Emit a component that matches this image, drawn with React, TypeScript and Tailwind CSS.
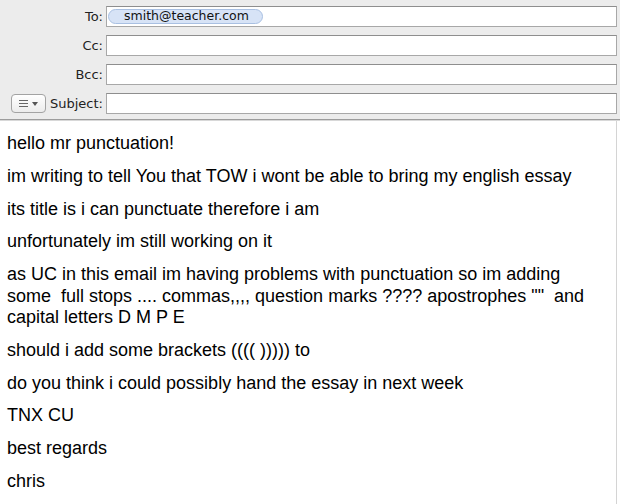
export default function App() {
  const lines: string[][] = [
    ["hello mr punctuation!"],
    ["im writing to tell You that TOW i wont be able to bring my english essay"],
    ["its title is i can punctuate therefore i am"],
    ["unfortunately im still working on it"],
    [
      "as UC in this email im having problems with punctuation so im adding",
      "some\u00a0 full stops .... commas,,,, question marks ???? apostrophes \"\"\u00a0 and",
      "capital letters D M P E",
    ],
    ["should i add some brackets (((( ))))) to"],
    ["do you think i could possibly hand the essay in next week"],
    ["TNX CU"],
    ["best regards"],
    ["chris"],
  ];

  const field = "h-[21px] flex-1 bg-white border border-[#a8a8a8] border-t-[#8e8e8e] flex items-center";
  const label = "text-[13px] text-[#222] text-right";

  return (
    <div className="w-[620px] h-[504px] bg-white flex flex-col overflow-hidden" style={{ fontFamily: "'DejaVu Sans', sans-serif" }}>
      <div className="bg-[#ececec] border-b border-[#9c9c9c] pt-[6px] pb-[5px] pr-[3px] flex flex-col gap-[8px] shadow-[0_1px_0_#d8d8d8]">
        <div className="flex items-center">
          <div className={`w-[106px] pr-[3px] ${label}`}>To:</div>
          <div className={field}>
            <span className="ml-[1px] h-[15px] w-[155px] rounded-full bg-[#d7e3f6] border border-[#a9c0e2] text-[12.5px] text-[#111] flex items-center pl-[15px] leading-none">
              smith@teacher.com
            </span>
          </div>
        </div>
        <div className="flex items-center">
          <div className={`w-[106px] pr-[3px] ${label}`}>Cc:</div>
          <div className={field} />
        </div>
        <div className="flex items-center">
          <div className={`w-[106px] pr-[3px] ${label}`}>Bcc:</div>
          <div className={field} />
        </div>
        <div className="flex items-center">
          <div className="w-[106px] flex items-center justify-end gap-[4px] pr-[3px]">
            <div className="w-[35px] h-[19px] rounded-[4px] border border-[#a3a3a3] bg-gradient-to-b from-white to-[#ececec] flex items-center justify-center gap-[4px] text-[#555]">
              <svg width="9" height="7" viewBox="0 0 9 7">
                <path d="M0 0.5H9M0 3.5H9M0 6.5H9" stroke="#666" strokeWidth="1" />
              </svg>
              <svg width="6" height="4" viewBox="0 0 6 4">
                <path d="M0 0H6L3 4Z" fill="#555" />
              </svg>
            </div>
            <span className={label}>Subject:</span>
          </div>
          <div className={field} />
        </div>
      </div>
      <div className="flex-1 mt-[1px] border-r border-[#d4d4d4] mr-[3px] pl-[7px] pt-[12px] flex flex-col gap-[11.25px] text-[18px] leading-[21.5px] text-black" style={{ fontFamily: "'Liberation Sans', Arial, sans-serif" }}>
        {lines.map((p, i) => (
          <div key={i}>
            {p.map((l, j) => (
              <div key={j} className="whitespace-pre">{l}</div>
            ))}
          </div>
        ))}
      </div>
    </div>
  );
}
